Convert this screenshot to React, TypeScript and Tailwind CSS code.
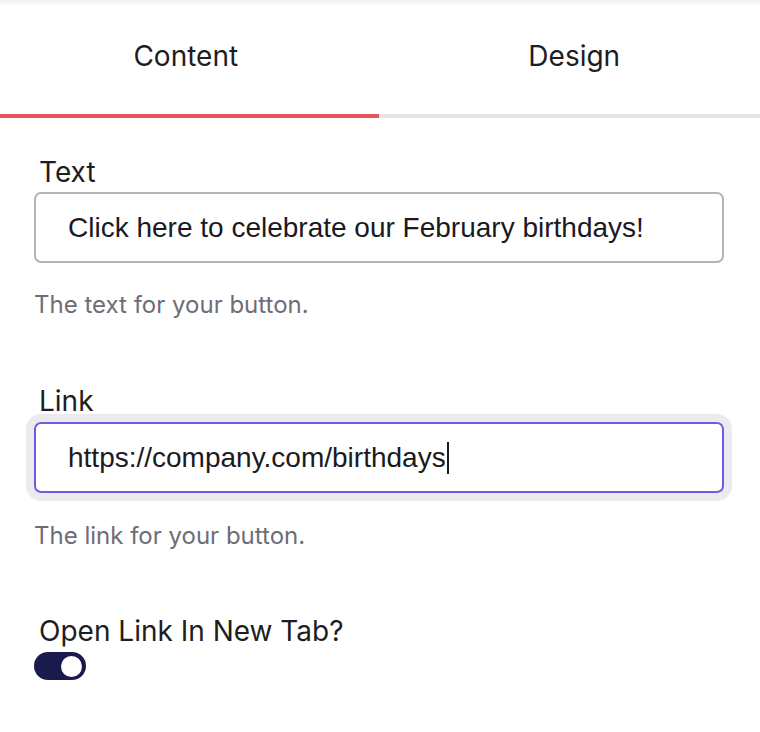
import React from "react";

export default function App() {
  return (
    <div className="w-[760px] h-[732px] bg-white overflow-hidden" style={{ fontFamily: "Inter, 'Noto Sans', sans-serif" }}>
      <div className="h-[6px] bg-gradient-to-b from-[#efeff1] to-white" />
      <div className="flex h-[108px] items-center pb-[8px] text-[28px] leading-[34px] text-[#1d1d22]">
        <div className="flex-1 text-center pr-[10px]">Content</div>
        <div className="flex-1 text-center pl-[7px]">Design</div>
      </div>
      <div className="h-[4px] bg-[#e4e3ea] flex">
        <div className="w-[379px] bg-[#e5545b]" />
      </div>
      <div className="pl-[34px] pr-[36px]">
        <div className="mt-[38px] pl-[5px] text-[28px] leading-[32px] text-[#1d1d22]">Text</div>
        <div className="mt-[4px] h-[71px] rounded-[7px] border-2 border-[#b3b3bb] flex items-center pl-[32px] text-[28px] text-[#1a1a1f]" style={{ fontFamily: "'Liberation Sans', Arial, sans-serif" }}>
          Click here to celebrate our February birthdays!
        </div>
        <div className="mt-[28px] text-[24px] leading-[28px] text-[#6d6d78]">The text for your button.</div>

        <div className="mt-[66px] pl-[5px] text-[28px] leading-[32px] text-[#1d1d22]">Link</div>
        <div className="mt-[5px] h-[71px] rounded-[7px] border-2 border-[#6b5ce6] ring-8 ring-[#ebeaef] flex items-center pl-[32px] text-[28px] text-[#1a1a1f]" style={{ fontFamily: "'Liberation Sans', Arial, sans-serif" }}>
          https://company.com/birthdays<span className="inline-block w-[2px] h-[32px] bg-[#1a1a1f] ml-[1px]" />
        </div>
        <div className="mt-[29px] text-[24px] leading-[28px] text-[#6d6d78]">The link for your button.</div>

        <div className="mt-[65px] pl-[5px] text-[28px] leading-[32px] text-[#1d1d22]">Open Link In New Tab?</div>
        <div className="mt-[5px] w-[52px] h-[28px] rounded-full bg-[#1b1a4c] flex items-center justify-end pr-[4px]">
          <div className="w-[21px] h-[21px] rounded-full bg-white" />
        </div>
      </div>
    </div>
  );
}
